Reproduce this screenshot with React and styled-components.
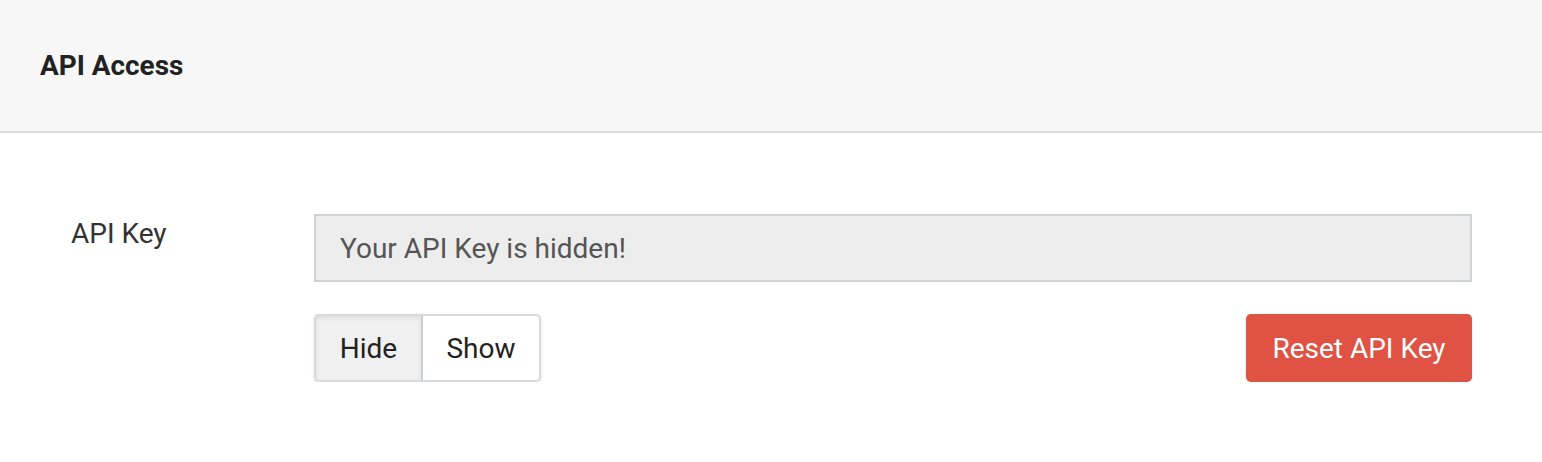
import React, { useState } from "react";
import styled, { createGlobalStyle } from "styled-components";

const GlobalStyle = createGlobalStyle`
  body {
    margin: 0;
    background: #ffffff;
    font-family: Roboto, "Liberation Sans", sans-serif;
    color: #333333;
  }
`;

const Panel = styled.section`
  width: 1542px;
`;

const Header = styled.header`
  box-sizing: border-box;
  height: 133px;
  display: flex;
  align-items: center;
  padding: 0 40px;
  background: #f7f7f7;
  border-bottom: 2px solid #dddddd;
`;

const Title = styled.h2`
  margin: 0;
  font-size: 27.9px;
  font-weight: 700;
  color: #222222;
`;

const Body = styled.div`
  display: grid;
  grid-template-columns: 243px 1158px;
  padding: 81px 0 0 71px;
`;

const Label = styled.label`
  font-size: 28px;
  color: #333333;
  padding-top: 3px;
`;

const Field = styled.div`
  display: flex;
  flex-direction: column;
  gap: 32px;
`;

const KeyInput = styled.input`
  box-sizing: border-box;
  width: 100%;
  height: 68px;
  padding: 0 24px;
  border: 2px solid #d0d3d6;
  background: #ededed;
  font-family: Roboto, "Liberation Sans", sans-serif;
  font-size: 28px;
  color: #555555;
  outline: none;

  &::placeholder {
    color: #555555;
  }
`;

const Actions = styled.div`
  display: flex;
  justify-content: space-between;
  align-items: center;
`;

const Toggle = styled.div`
  display: flex;
  border-radius: 5px;
  box-shadow: 0 1px 3px rgba(0, 0, 0, 0.12);
`;

const ToggleButton = styled.button`
  box-sizing: border-box;
  height: 68px;
  width: ${(p) => (p.$first ? "109px" : "118px")};
  padding: 0;
  font-family: Roboto, "Liberation Sans", sans-serif;
  font-size: 28px;
  color: #222222;
  cursor: pointer;
  background: ${(p) => (p.$active ? "#f0f0f0" : "#ffffff")};
  border: 2px solid #d8dadc;
  border-left-width: ${(p) => (p.$first ? "2px" : "0")};
  border-radius: ${(p) => (p.$first ? "5px 0 0 5px" : "0 5px 5px 0")};
  box-shadow: ${(p) =>
    p.$active ? "inset 0 2px 4px rgba(0, 0, 0, 0.08)" : "none"};
  ${(p) => p.$first && "border-right-color: #c9cdd0;"}
`;

const DangerButton = styled.button`
  height: 68px;
  width: 226px;
  padding: 0;
  border: none;
  border-radius: 5px;
  background: #e05243;
  color: #ffffff;
  font-family: Roboto, "Liberation Sans", sans-serif;
  font-size: 28px;
  cursor: pointer;
  box-shadow: 0 1px 3px rgba(0, 0, 0, 0.1);
`;

export default function App() {
  const [visible, setVisible] = useState(false);

  return (
    <>
      <GlobalStyle />
      <Panel>
        <Header>
          <Title>API Access</Title>
        </Header>
        <Body>
          <Label htmlFor="api-key">API Key</Label>
          <Field>
            <KeyInput
              id="api-key"
              readOnly
              value={visible ? "3f9a1c7e5b2d4a8f" : ""}
              placeholder="Your API Key is hidden!"
            />
            <Actions>
              <Toggle>
                <ToggleButton
                  $first
                  $active={!visible}
                  onClick={() => setVisible(false)}
                >
                  Hide
                </ToggleButton>
                <ToggleButton
                  $active={visible}
                  onClick={() => setVisible(true)}
                >
                  Show
                </ToggleButton>
              </Toggle>
              <DangerButton>Reset API Key</DangerButton>
            </Actions>
          </Field>
        </Body>
      </Panel>
    </>
  );
}
